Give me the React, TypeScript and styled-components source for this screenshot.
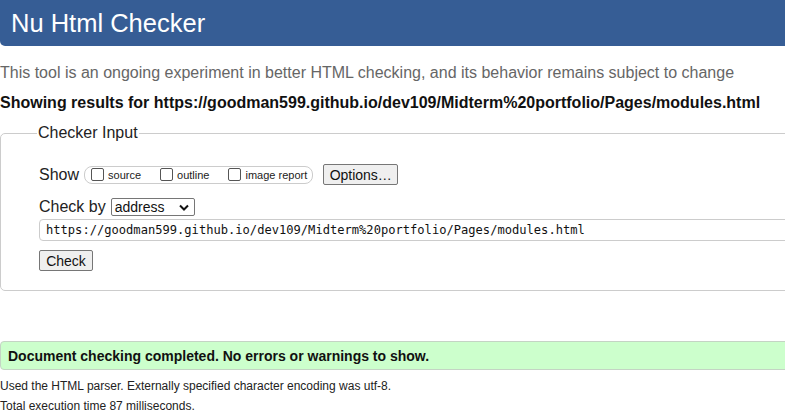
import styled, { createGlobalStyle } from 'styled-components'

const HEADER_BLUE = '#365d95';
const BORDER = '#cccccc';
const URL = 'https://goodman599.github.io/dev109/Midterm%20portfolio/Pages/modules.html';

const GlobalStyle = createGlobalStyle`
  html, body {
    margin: 0;
    padding: 0;
    background: #fff;
    overflow: hidden;
  }
  body {
    font-family: "Liberation Sans", Arial, sans-serif;
    color: #000;
  }
`

const Page = styled.div`
  width: 1100px;
  display: flex;
  flex-direction: column;
`

const Header = styled.h1`
  margin: 0;
  height: 46px;
  background: ${HEADER_BLUE};
  border-radius: 0 0 0 5px;
  color: #fff;
  font-weight: 400;
  font-size: 25.5px;
  line-height: 46px;
  padding-left: 11px;
`

const Intro = styled.p`
  margin: 17px 0 0;
  font-size: 16px;
  line-height: 20px;
  color: #666;
`

const Results = styled.p`
  margin: 10px 0 0;
  font-size: 16px;
  line-height: 20px;
  font-weight: 700;
  color: #111;
`

const Fieldset = styled.fieldset`
  margin: 11px 0 0;
  padding: 0 0 19px 38px;
  border: 1px solid ${BORDER};
  border-radius: 5px;
  display: flex;
  flex-direction: column;
  align-items: flex-start;

  legend {
    margin-left: -2px;
    padding: 0 1px;
    font-size: 16px;
    line-height: 18px;
    color: #222;
  }
`

const Row = styled.div<{ $top: number }>`
  display: flex;
  align-items: center;
  margin-top: ${p => p.$top}px;
  font-size: 16px;
  color: #222;
`

const Label = styled.span`
  margin-right: 5px;
`

const ShowGroup = styled.div`
  display: flex;
  align-items: center;
  height: 16px;
  padding: 0 5px 0 3px;
  border: 1px solid ${BORDER};
  border-radius: 8px;
  margin-right: 10px;
`

const Check = styled.label<{ $gap: number }>`
  display: flex;
  align-items: center;
  margin-right: ${p => p.$gap}px;
  font-size: 11px;
  color: #222;

  span.box {
    width: 11px;
    height: 11px;
    border: 1px solid #555;
    border-radius: 2px;
    margin: 0 4px 0 3px;
  }
`

const Button = styled.button<{ $w: number }>`
  width: ${p => p.$w}px;
  height: 21px;
  padding: 0;
  background: #efefef;
  border: 1px solid #767676;
  border-radius: 2px;
  font-family: "Liberation Sans", Arial, sans-serif;
  font-size: 14px;
  color: #111;
`

const Select = styled.div`
  width: 84px;
  height: 18px;
  box-sizing: border-box;
  border: 1px solid #767676;
  border-radius: 2px;
  display: flex;
  align-items: center;
  justify-content: space-between;
  padding: 0 5px 0 3px;
  font-size: 14px;
  color: #111;
`

const UrlInput = styled.div`
  margin-top: 3px;
  width: 900px;
  height: 22px;
  box-sizing: border-box;
  border: 1px solid ${BORDER};
  border-radius: 4px;
  padding-left: 6px;
  display: flex;
  align-items: center;
  font-family: "DejaVu Sans Mono", "Liberation Mono", monospace;
  font-size: 12.1px;
  color: #111;
`

const Status = styled.div`
  margin-top: 50px;
  height: 29px;
  box-sizing: border-box;
  background: #ccffcc;
  border: 1px solid #c4d4c4;
  border-radius: 4px;
  padding-left: 7px;
  display: flex;
  align-items: center;
  font-size: 14px;
  font-weight: 700;
  color: #111;
`

const Note = styled.p<{ $top: number }>`
  margin: ${p => p.$top}px 0 0;
  font-size: 12px;
  line-height: 15px;
  color: #222;
`

function Checkbox({ label, gap }: { label: string; gap: number }) {
  return (
    <Check $gap={gap}>
      <span className="box" />
      {label}
    </Check>
  )
}

function App() {
  return (
    <>
      <GlobalStyle />
      <Page>
        <Header>Nu Html Checker</Header>
        <Intro>This tool is an ongoing experiment in better HTML checking, and its behavior remains subject to change</Intro>
        <Results>Showing results for {URL}</Results>

        <Fieldset>
          <legend>Checker Input</legend>

          <Row $top={22}>
            <Label>Show</Label>
            <ShowGroup>
              <Checkbox label="source" gap={16} />
              <Checkbox label="outline" gap={16} />
              <Checkbox label="image report" gap={0} />
            </ShowGroup>
            <Button $w={75}>Options…</Button>
          </Row>

          <Row $top={13}>
            <Label>Check by</Label>
            <Select>
              address
              <svg width="10" height="7" viewBox="0 0 10 7">
                <path d="M1 1.5 L5 5.5 L9 1.5" fill="none" stroke="#111" strokeWidth="2" />
              </svg>
            </Select>
          </Row>

          <UrlInput>{URL}</UrlInput>

          <Row $top={9}>
            <Button $w={54}>Check</Button>
          </Row>
        </Fieldset>

        <Status>Document checking completed. No errors or warnings to show.</Status>
        <Note $top={9}>Used the HTML parser. Externally specified character encoding was utf-8.</Note>
        <Note $top={5}>Total execution time 87 milliseconds.</Note>
      </Page>
    </>
  )
}

export default App
